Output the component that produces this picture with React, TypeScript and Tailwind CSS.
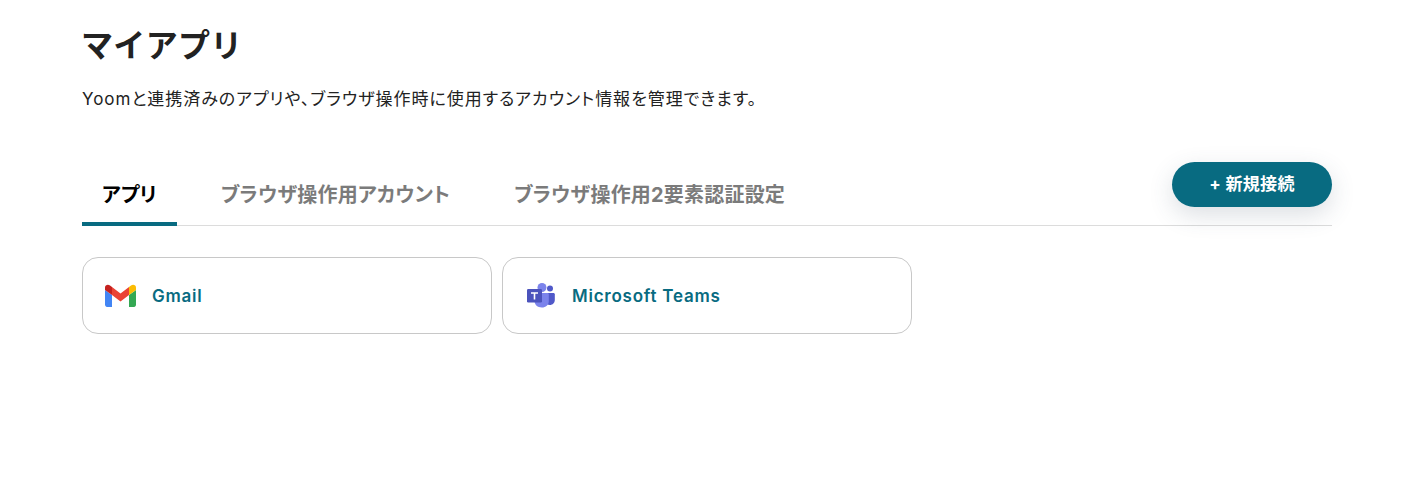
const fontStack = "font-['Inter','Noto_Sans_CJK_JP',sans-serif]";

const GmailIcon = () => (
  <svg width="31" height="24" viewBox="0 0 31 24">
    <path d="M2 23h5V11L0 6v14.500C0 22 1 23 2 23z" fill="#4285f4" />
    <path d="M24 23h5c1.200 0 2-1 2-2.500V6l-7 5z" fill="#34a853" />
    <path d="M24 3v8l7-5V3.500C31 1 28 0 26 1.500z" fill="#fbbc04" />
    <path d="M7 11V3l8.500 6.500L24 3v8l-8.500 6.500z" fill="#ea4335" />
    <path d="M0 3.500V6l7 5V3L5 1.500C3 0 0 1 0 3.500z" fill="#c5221f" />
  </svg>
);

const TeamsIcon = () => (
  <svg width="28" height="26" viewBox="0 0 28 26">
    <circle cx="15" cy="4.500" r="4.500" fill="#7b83eb" />
    <circle cx="23" cy="5.500" r="3" fill="#5059c9" />
    <path d="M17 10h9.500c.7 0 1.300.6 1.300 1.300V17c0 2.800-2.200 5-5 5-2 0-3.800-1-4.800-2.500z" fill="#5059c9" />
    <path d="M7.500 10h13c.8 0 1.300.6 1.300 1.300V18c0 4-3 6.500-7 6.500-4.200 0-7.300-2.800-7.300-6.500z" fill="#7b83eb" />
    <rect x="0" y="6" width="15" height="13.500" rx="1.200" fill="#4b53bc" />
    <path d="M4 9.300h7v1.500H8.300v5.700H6.700v-5.700H4z" fill="#fff" />
  </svg>
);

const tabs = [
  { label: "アプリ", active: true },
  { label: "ブラウザ操作用アカウント", active: false },
  { label: "ブラウザ操作用2要素認証設定", active: false },
];

const apps = [
  { name: "Gmail", icon: <GmailIcon /> },
  { name: "Microsoft Teams", icon: <TeamsIcon /> },
];

export default function App() {
  return (
    <div className={`${fontStack} min-h-[478px] w-[1428px] overflow-hidden bg-white pl-[82px] pr-[96px] text-[#222222]`}>
      {/* Heading */}
      <h1 className="-ml-px pt-[22px] text-[32px] font-bold leading-[48px] tracking-[0.01em]">マイアプリ</h1>
      <p className="mt-[17px] text-[17px] leading-6 tracking-[0.057em] [font-feature-settings:'palt']">
        Yoomと連携済みのアプリや、ブラウザ操作時に使用するアカウント情報を管理できます。
      </p>

      {/* Tabs */}
      <div className="relative mt-[50px] flex h-[65px] gap-6 border-b border-[#dcdcdc]">
        {tabs.map((tab) => (
          <div
            key={tab.label}
            className={`flex h-[65px] items-center px-5 text-[20px] font-bold tracking-[0.01em] [font-feature-settings:'palt'] ${
              tab.active ? "rounded-t-[3px] border-b-4 border-[#086b81] pt-[6px] text-black" : "pt-[2px] text-[#7b7b7b]"
            }`}
          >
            {tab.label}
          </div>
        ))}
        <button className="absolute right-0 top-px h-[45px] w-40 rounded-full bg-[#086b81] text-[17px] font-bold tracking-[0.02em] text-white shadow-[0_8px_24px_rgba(60,80,100,0.18)] [font-feature-settings:'palt']">
          + 新規接続
        </button>
      </div>

      {/* App cards */}
      <div className="mt-[31px] flex gap-[10px]">
        {apps.map((app) => (
          <div
            key={app.name}
            className="flex h-[77px] w-[410px] items-center rounded-2xl border border-[#c8c8c8] pl-[22px]"
          >
            <div className="flex w-[31px] justify-center">{app.icon}</div>
            <span className="ml-[16px] pt-[2px] text-[17px] font-semibold tracking-[0.045em] text-[#086b81]">{app.name}</span>
          </div>
        ))}
      </div>
    </div>
  );
}
